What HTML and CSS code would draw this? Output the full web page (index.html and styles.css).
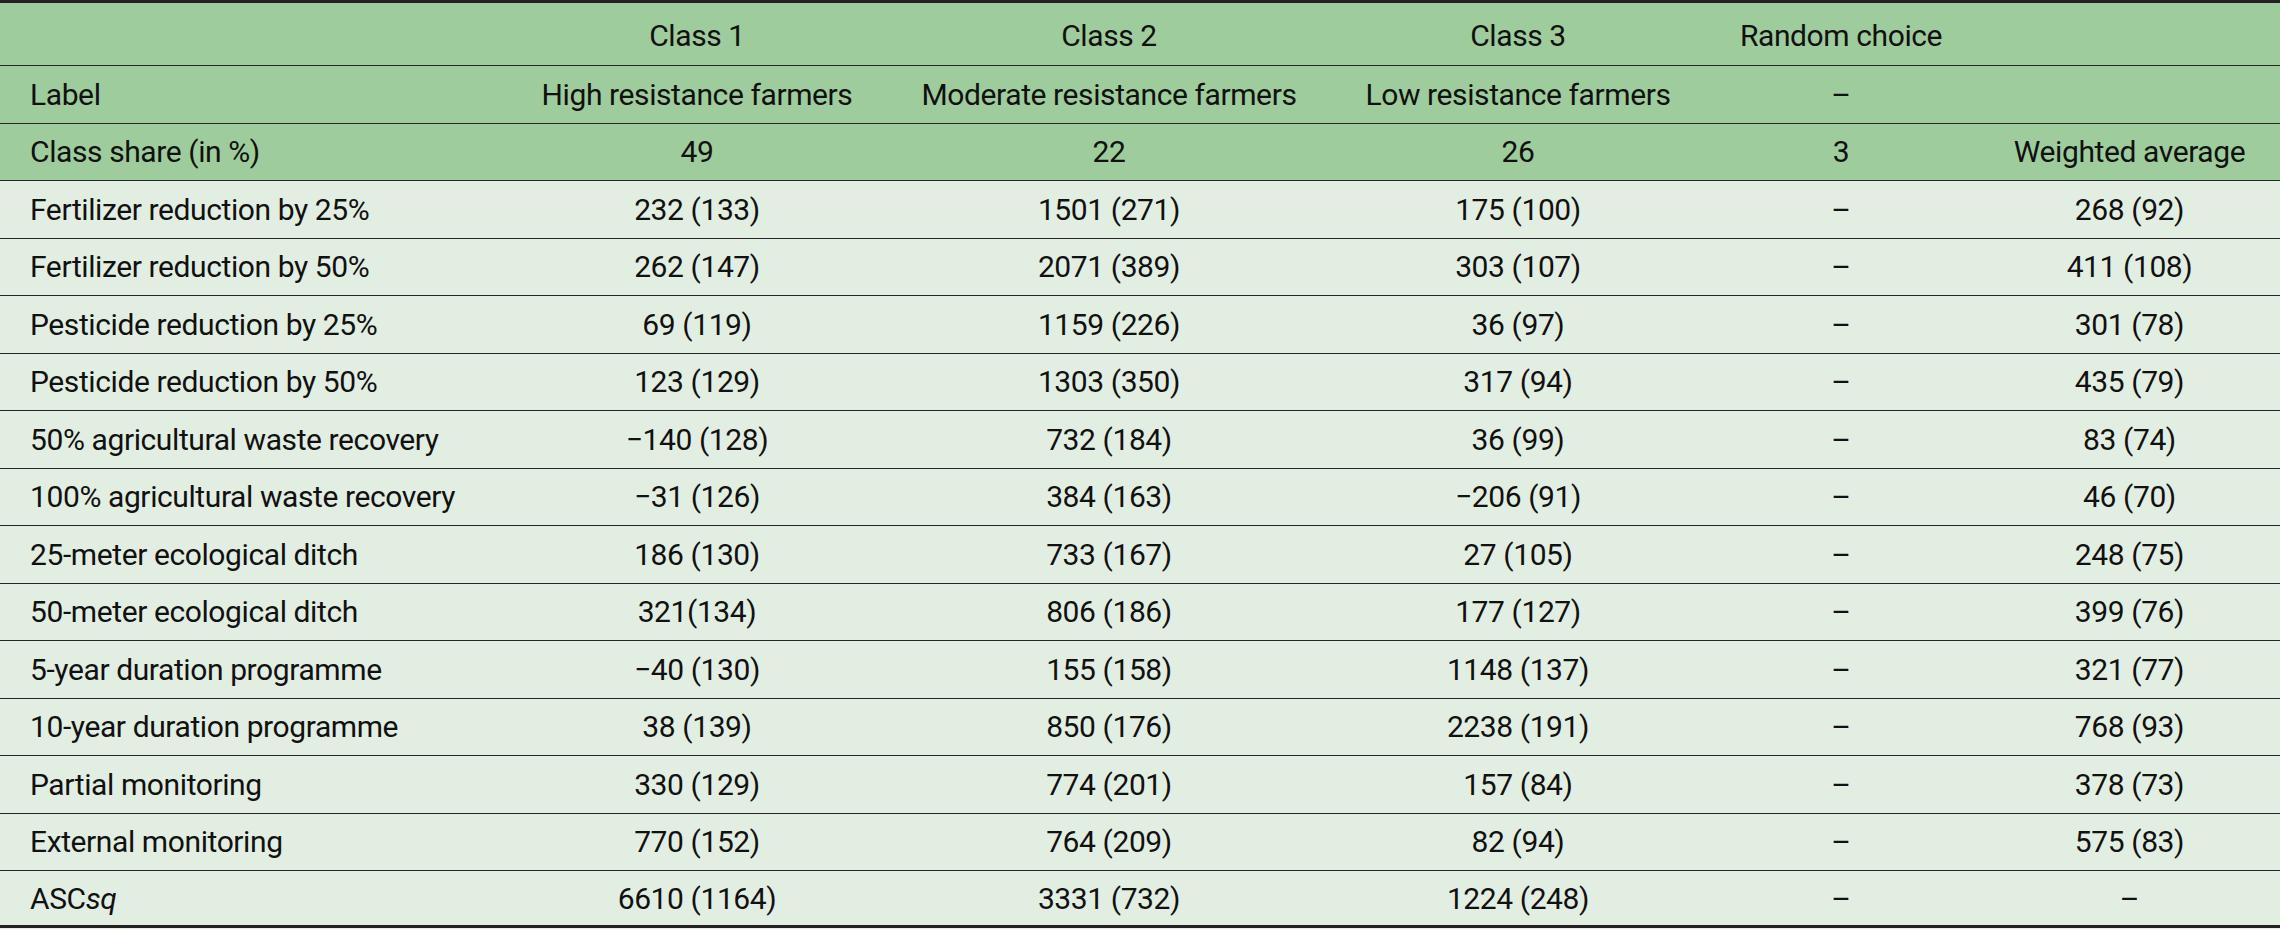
FILE: index.html
```html
<!DOCTYPE html>
<html lang="en">
<head>
<meta charset="utf-8">
<title>Latent class WTP</title>
<link rel="stylesheet" href="styles.css">
</head>
<body>
<table class="wtp">
  <colgroup>
    <col class="c-attr"><col class="c-1"><col class="c-2"><col class="c-3"><col class="c-rand"><col class="c-avg">
  </colgroup>
  <thead>
    <tr class="top">
      <th></th><th>Class 1</th><th>Class 2</th><th>Class 3</th><th>Random choice</th><th></th>
    </tr>
    <tr>
      <th>Label</th><th>High resistance farmers</th><th>Moderate resistance farmers</th><th>Low resistance farmers</th><th>–</th><th></th>
    </tr>
    <tr>
      <th>Class share (in %)</th><th>49</th><th>22</th><th>26</th><th>3</th><th>Weighted average</th>
    </tr>
  </thead>
  <tbody>
    <tr><td>Fertilizer reduction by 25%</td><td>232 (133)</td><td>1501 (271)</td><td>175 (100)</td><td>–</td><td>268 (92)</td></tr>
    <tr><td>Fertilizer reduction by 50%</td><td>262 (147)</td><td>2071 (389)</td><td>303 (107)</td><td>–</td><td>411 (108)</td></tr>
    <tr><td>Pesticide reduction by 25%</td><td>69 (119)</td><td>1159 (226)</td><td>36 (97)</td><td>–</td><td>301 (78)</td></tr>
    <tr><td>Pesticide reduction by 50%</td><td>123 (129)</td><td>1303 (350)</td><td>317 (94)</td><td>–</td><td>435 (79)</td></tr>
    <tr><td>50% agricultural waste recovery</td><td>−140 (128)</td><td>732 (184)</td><td>36 (99)</td><td>–</td><td>83 (74)</td></tr>
    <tr><td>100% agricultural waste recovery</td><td>−31 (126)</td><td>384 (163)</td><td>−206 (91)</td><td>–</td><td>46 (70)</td></tr>
    <tr><td>25-meter ecological ditch</td><td>186 (130)</td><td>733 (167)</td><td>27 (105)</td><td>–</td><td>248 (75)</td></tr>
    <tr><td>50-meter ecological ditch</td><td>321(134)</td><td>806 (186)</td><td>177 (127)</td><td>–</td><td>399 (76)</td></tr>
    <tr><td>5-year duration programme</td><td>−40 (130)</td><td>155 (158)</td><td>1148 (137)</td><td>–</td><td>321 (77)</td></tr>
    <tr><td>10-year duration programme</td><td>38 (139)</td><td>850 (176)</td><td>2238 (191)</td><td>–</td><td>768 (93)</td></tr>
    <tr><td>Partial monitoring</td><td>330 (129)</td><td>774 (201)</td><td>157 (84)</td><td>–</td><td>378 (73)</td></tr>
    <tr><td>External monitoring</td><td>770 (152)</td><td>764 (209)</td><td>82 (94)</td><td>–</td><td>575 (83)</td></tr>
    <tr class="last"><td>ASC<i>sq</i></td><td>6610 (1164)</td><td>3331 (732)</td><td>1224 (248)</td><td>–</td><td>–</td></tr>
  </tbody>
</table>
</body>
</html>
```
FILE: styles.css
```css
html, body {
  margin: 0;
  padding: 0;
  background: #e3eee3;
}

.wtp {
  width: 2280px;
  table-layout: fixed;
  border-collapse: collapse;
  font-family: Roboto, "Liberation Sans", sans-serif;
  font-size: 30px;
  color: #111;
  letter-spacing: -0.4px;
  border-top: 3px solid #222;
  border-bottom: 3px solid #222;
}

.c-attr { width: 509px; }
.c-1 { width: 376px; }
.c-2 { width: 448px; }
.c-3 { width: 370px; }
.c-rand { width: 276px; }
.c-avg { width: 301px; }

.wtp th,
.wtp td {
  height: 56.5px;
  padding: 0 10px;
  text-align: center;
  vertical-align: middle;
  font-weight: normal;
  border-bottom: 1px solid #262626;
  white-space: nowrap;
}

.wtp th:first-child,
.wtp td:first-child {
  text-align: left;
  padding-left: 30px;
}

.wtp thead th {
  background: #9ecc9c;
}

.wtp thead tr.top th {
  height: 59px;
  padding-top: 3px;
}

.wtp tbody td {
  background: #e3eee3;
}

.wtp tbody tr.last td {
  height: 54px;
  border-bottom: none;
}
```
